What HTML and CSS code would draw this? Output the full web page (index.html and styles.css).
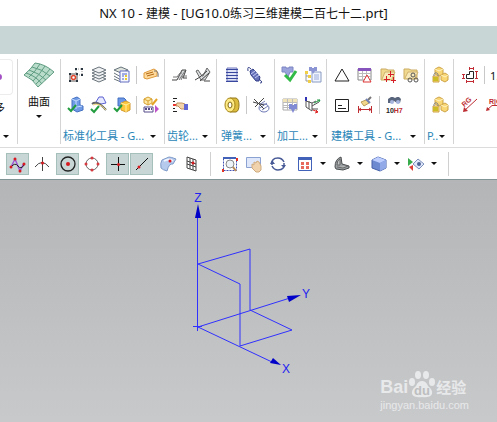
FILE: index.html
```html
<!DOCTYPE html>
<html lang="zh-CN">
<head>
    <meta charset="UTF-8">
    <meta name="viewport" content="width=device-width, initial-scale=1.0">
    <title>NX 10 - 建模</title>
    <link rel="stylesheet" href="styles.css">
</head>
<body>
    <header class="titlebar">NX 10 - <span>建模</span> - [UG10.0<span>练习三维建模二百七十二</span>.prt]</header>
    <div class="tabband"></div>

    <!-- ribbon -->
    <div class="ribbon">
        <section class="group g-more">
            <button class="big more">
                <span class="more-box"><svg width="12" height="34" viewBox="0 0 12 34"><circle cx="-1" cy="17" r="3" fill="#a24fc4"/></svg></span>
                <span class="more-text">多</span>
            </button>
            <button class="caption" aria-label="更多"><i class="arrow"></i></button>
        </section>

        <section class="group g-surface">
            <button class="big">
                <svg width="32" height="28" viewBox="0 0 32 28">
                    <path d="M12 2Q22 3 31 11L15 26Q10 18 1 14Q8 8 12 2Z" fill="#b9ddca" stroke="#5f9c82"/>
                    <path d="M9 6Q19 8 27 15M6 9Q16 12 23 19M3 12Q13 15 19 23M17 3Q12 11 6 16M22 5Q17 13 10 20M27 8Q22 15 13 23" fill="none" stroke="#5f9c82"/>
                </svg>
                <span>曲面</span>
                <i class="arrow"></i>
            </button>
        </section>

        <section class="group g-std">
            <div class="icons">
                <div class="row">
                    <button aria-label="属性"><svg viewBox="0 0 18 18"><path d="M9 3h6v6H9z" fill="#fff" stroke="#999" stroke-dasharray="1 1"/><path d="M3 8h7v7H3z" fill="#fff" stroke="#555"/><circle cx="6.500" cy="11.500" r="2" fill="#fff" stroke="#e0452c" stroke-width="1.500"/><path d="M8 2h2v2H8zM14 2h2v2h-2zM14 8h2v2h-2zM2 7h2v2H2zM9 7h2v2H9zM2 14h2v2H2zM9 14h2v2H9z" fill="#2c3640"/></svg></button>
                    <button aria-label="图层"><svg viewBox="0 0 18 18"><g fill="#eef0f2" stroke="#6a747c"><path d="M2 13l7-3 7 3-7 3z"/><path d="M2 10l7-3 7 3-7 3z"/><path d="M2 7l7-3 7 3-7 3z"/><path d="M2 4l7-3 7 3-7 3z"/></g></svg></button>
                    <button aria-label="图层设置"><svg viewBox="0 0 18 18"><path d="M1 13l7 3M1 10l7 4M1 7l7 4M1 4l7-3 7 3-7 3z" fill="#dfe4df" stroke="#68747c"/><path d="M7 5h9v11H7z" fill="#f6f7ff" stroke="#656fc0"/><path d="M9 8h5M9 10h2M9 13h2" stroke="#4b60c8"/><path d="M12 9h2v2h-2zM12 12h2v2h-2z" fill="#e8c930"/></svg></button>
                    <i class="bar"></i>
                    <button aria-label="标签"><svg viewBox="0 0 18 18"><path d="M2 7l10-4 3 2v5L5 13l-3-1z" fill="#ffd99a" stroke="#dd9a3c"/><path d="M4 8l7-2M5 10l7-2" stroke="#b06814"/><path d="M12 5q5-1 4 6" fill="none" stroke="#777"/></svg></button>
                </div>
                <div class="row">
                    <button aria-label="检查部件"><svg viewBox="0 0 18 18"><path d="M5 3l5-2 3 2v6l3 1v4l-6 2-5-3z" fill="#6f9be6" stroke="#4470c0"/><path d="M5 3l4 2v8M9 5l4-2M10 11l5-1" fill="none" stroke="#c5dbff"/><path d="M1 12l3 3 5-6" fill="none" stroke="#219c3e" stroke-width="2"/></svg></button>
                    <button aria-label="检查曲面"><svg viewBox="0 0 18 18"><path d="M6 6l3-5h4l3 6-5 1z" fill="#e7e9ff" stroke="#5b61d0"/><path d="M2 8q5-4 14 6" fill="none" stroke="#666" stroke-width="2"/><path d="M3 9q6-3 13 5" fill="none" stroke="#efd678"/><path d="M1 13l3 3 5-6" fill="none" stroke="#219c3e" stroke-width="2"/></svg></button>
                    <button aria-label="检查装配"><svg viewBox="0 0 18 18"><path d="M5 2h6l2 2v6H5z" fill="#6b96e5" stroke="#4470c0"/><path d="M8 7l5-2 4 2v7l-4 2-5-2z" fill="#ffc83b" stroke="#d39a2c"/><path d="M8 7l5 2 4-2M13 9v7" fill="none" stroke="#fff0a0"/><path d="M1 12l3 3 5-6" fill="none" stroke="#219c3e" stroke-width="2"/></svg></button>
                    <i class="bar"></i>
                    <button aria-label="重命名"><svg viewBox="0 0 18 18"><path d="M2 3l4-2 4 2v4L6 9 2 7z" fill="#ffe9a6" stroke="#d5a030"/><path d="M2 3l4 2 4-2M6 5v4" fill="none" stroke="#d5a030"/><path d="M10 9l5-6" stroke="#e4a326" stroke-width="2"/><path d="M2 11h9v5H2z" fill="#fff" stroke="#554a88"/><path d="M3 13h2M6 13h2M9 13h1" stroke="#554a88" stroke-width="2"/><path d="M13 9l4 4-4 4z" fill="#c052c8"/></svg></button>
                </div>
            </div>
            <button class="caption"><span>标准化工具 - G...</span><i class="arrow"></i></button>
        </section>

        <section class="group g-gear">
            <div class="icons">
                <div class="row">
                    <button aria-label="柱齿轮"><svg viewBox="0 0 18 18"><path d="M7 13l4-9h4l-3 8z" fill="#d5d8d9"/><path d="M1 14h5l5-10h4l-3 8h4" fill="none" stroke="#444"/><path d="M2 11h4l3-4h2M8 14l6-9M10 14l2-4h4" fill="none" stroke="#777"/></svg></button>
                    <button aria-label="锥齿轮"><svg viewBox="0 0 18 18"><path d="M2 5l5 9h4l5-8-3-4-4 8H8L4 4z" fill="#dcdfe0" stroke="#666"/><path d="M1 14l5-3 7-6M6 15l9-8M10 15h6" fill="none" stroke="#444"/></svg></button>
                </div>
                <div class="row">
                    <button aria-label="选择列表"><svg viewBox="0 0 18 18"><path d="M2 2.500h4M2 5.500h2M2 12.500h2M2 15.500h4" stroke="#222"/><path d="M2 9h4" stroke="#e33" stroke-width="2"/><path d="M6 7h5l3 1v5h-4l-3-3H5z" fill="#f3d3aa" stroke="#bf9160"/><path d="M13 8h4v6h-4z" fill="#6067d4"/></svg></button>
                </div>
            </div>
            <button class="caption"><span>齿轮...</span><i class="arrow"></i></button>
        </section>

        <section class="group g-spring">
            <div class="icons">
                <div class="row">
                    <button aria-label="圆柱弹簧"><svg viewBox="0 0 18 18"><path d="M4 2h10v13H4z" fill="#dfe3f6" stroke="#6f79bd"/><path d="M3 3.500h12M3 6.500h12M3 9.500h12M3 12.500h12M3 15.500h12" stroke="#39469d"/></svg></button>
                    <button aria-label="拉伸弹簧"><svg viewBox="0 0 18 18"><path d="M4 5l3-2 7 8-1 4h-3L5 9z" fill="#6873ba" stroke="#303d87"/><path d="M5 8l4-3M7 10l4-3M9 12l4-3" stroke="#c4cbf5"/><path d="M5 3Q1-1 2 5M13 13q5 4 1 4" fill="none" stroke="#303d87"/></svg></button>
                </div>
                <div class="row">
                    <button aria-label="碟簧"><svg viewBox="0 0 18 18"><path d="M7 2h6q3 1 3 7t-3 7H7z" fill="#dcbc3c" stroke="#94791a"/><ellipse cx="7" cy="9" rx="5" ry="7" fill="#ffeb86" stroke="#a48416"/><ellipse cx="7" cy="9" rx="2" ry="3" fill="#fff" stroke="#806810"/></svg></button>
                    <i class="bar"></i>
                    <button aria-label="删除弹簧"><svg viewBox="0 0 18 18"><path d="M7 9l6-4M8 12l7-5M10 14l6-4" stroke="#7681b9"/><ellipse cx="12" cy="12" rx="5" ry="4" fill="none" stroke="#6976b3"/><path d="M2 3l10 10M12 2L3 11M1 6l11 3" stroke="#444"/></svg></button>
                </div>
            </div>
            <button class="caption"><span>弹簧...</span><i class="arrow"></i></button>
        </section>

        <section class="group g-mach">
            <div class="icons">
                <div class="row">
                    <button aria-label="加工检查"><svg viewBox="0 0 18 18"><path d="M1 1h4v1h3V1h4v5H9l-2 5-3-5H1z" fill="#9aa3db" stroke="#7d86c2"/><path d="M4 9l5 5 6-9" fill="none" stroke="#32ba46" stroke-width="3"/></svg></button>
                    <button aria-label="加工导航器"><svg viewBox="0 0 18 18"><path d="M2 6v9h4M2 10h4" fill="none" stroke="#999"/><path d="M1 5h3v3H1zM4 9h3v3H4zM4 14h3v3H4z" fill="#f0ce45"/><path d="M8 6h9v10H8z" fill="#f1f5ff" stroke="#899bc2"/><path d="M10 9h5M10 11h5M10 13h5" stroke="#9bacdb"/><path d="M5 1h3v1h2V1h3v4h-2l-2 3-2-3H5z" fill="#8b95d4"/></svg></button>
                </div>
                <div class="row">
                    <button aria-label="加工表"><svg viewBox="0 0 18 18"><path d="M2 3h14v11H2z" fill="#fff" stroke="#aaa"/><path d="M2 3h14v3H2z" fill="#f0e3b8"/><path d="M2 6.500h14M2 9.500h14M2 11.500h14M6.500 3v11M11.500 3v11" stroke="#bbb"/><path d="M8 8h3v1h2V8h3v5h-2l-2 4-2-4H8z" fill="#808bd4"/></svg></button>
                    <button aria-label="坐标加工"><svg viewBox="0 0 18 18"><path d="M2 1v4" stroke="#3131b6" stroke-width="2"/><path d="M2 5l6 2v8l-6-4zM5 5v8M8 10l7-4M8 13h6M8 7l4-2" fill="none" stroke="#555"/><path d="M10 7l6-3M13 4h3l-1 2" fill="none" stroke="#249944"/><path d="M9 14l5 2M12 14l2 2-3 1" fill="none" stroke="#d22"/></svg></button>
                </div>
            </div>
            <button class="caption"><span>加工...</span><i class="arrow"></i></button>
        </section>

        <section class="group g-model">
            <div class="icons">
                <div class="row">
                    <button aria-label="三角形"><svg viewBox="0 0 18 18"><path d="M9 3l7 12H2z" fill="none" stroke="#222"/></svg></button>
                    <button aria-label="表格"><svg viewBox="0 0 18 18"><path d="M2 3h13v11H2z" fill="#fff" stroke="#888"/><path d="M2 7.500h13M2 10.500h13M6.500 4v10M10.500 4v10" stroke="#bbb"/><path d="M2 2h13v3H2z" fill="#8754bd"/><path d="M11 9l4 7H7z" fill="#fff" stroke="#d33"/></svg></button>
                    <button aria-label="新建文件夹"><svg viewBox="0 0 18 18"><path d="M2 3h5l2 1h6v10H2z" fill="#f0d98f" stroke="#c9ab61"/><path d="M3 13l3-7h10l-3 7" fill="#f8e9b8" stroke="#d0b26c"/><path d="M11.500 5v6M9 8.500h6M7.500 10v6M5 13.500h6M14.500 11v6M12 14.500h5" stroke="#d51e28"/></svg></button>
                    <button aria-label="文件夹链接"><svg viewBox="0 0 18 18"><path d="M2 3h5l2 1h6v9H2z" fill="#f0d98f" stroke="#c9ab61"/><path d="M3 12l3-6h10l-3 6" fill="#f8e9b8" stroke="#d0b26c"/><g fill="none" stroke="#555"><circle cx="11" cy="9" r="2"/><circle cx="8" cy="14" r="2"/><circle cx="14" cy="14" r="2"/></g></svg></button>
                </div>
                <div class="row">
                    <button aria-label="注释框"><svg viewBox="0 0 18 18"><path d="M2.500 3.500h13v12h-13z" fill="#fff" stroke="#222"/><path d="M5 9.500h4M5 12.500h8" stroke="#222"/></svg></button>
                    <button aria-label="清理尺寸"><svg viewBox="0 0 18 18"><path d="M12 4l3-3" stroke="#777" stroke-width="2"/><path d="M5 6l5-2 3 3-5 3z" fill="#f0d78b" stroke="#b99a57"/><path d="M10 3l4 4" stroke="#7483b7" stroke-width="2"/><path d="M2.500 10v7M15.500 10v7M3 13.500h12M5 12l-2 1.500 2 1.500M13 12l2 1.500-2 1.500" fill="none" stroke="#bd2d32"/></svg></button>
                    <i class="bar"></i>
                    <button aria-label="公差查询"><svg viewBox="0 0 18 18"><path d="M3 3l3-2h2l2 1 2-1h2l2 2-1 4h-3L9 5 7 7H3z" fill="#59657c"/><circle cx="7" cy="6" r="2" fill="#a8b6df"/><circle cx="13" cy="6" r="2" fill="#a8b6df"/><text x="1" y="17" class="fit">10<tspan fill="#bd2d32">H7</tspan></text></svg></button>
                </div>
            </div>
            <button class="caption"><span>建模工具 - G...</span><i class="arrow"></i></button>
        </section>

        <section class="group g-parts">
            <div class="icons">
                <div class="row">
                    <button aria-label="添加组件"><svg viewBox="0 0 18 18"><g fill="#f9d774" stroke="#cda448"><path d="M4 3l4-2 4 2v5l-4 2-4-2z"/><path d="M10 9l4-2 3 2v5l-3 2-4-2z"/><path d="M2 10h6v6H2z"/></g><path d="M4 3l4 2 4-2M10 9l4 2 3-2" fill="none" stroke="#fff3c0"/><path d="M3 10V8q2-3 4 0v2" fill="none" stroke="#888"/><path d="M2 11h5v4H2z" fill="#cbbc28"/></svg></button>
                </div>
                <div class="row">
                    <button aria-label="装配组件"><svg viewBox="0 0 18 18"><g fill="#f9d774" stroke="#cda448"><path d="M4 3l4-2 4 2v5l-4 2-4-2z"/><path d="M10 9l4-2 3 2v5l-3 2-4-2z"/><path d="M2 10h6v6H2z"/></g><path d="M4 3l4 2 4-2M10 9l4 2 3-2" fill="none" stroke="#fff3c0"/><path d="M3 10V8q2-3 4 0v2" fill="none" stroke="#888"/><path d="M2 11h5v4H2z" fill="#cbbc28"/></svg></button>
                </div>
            </div>
            <button class="caption"><span>P..</span><i class="arrow"></i></button>
        </section>

        <section class="group g-dim">
            <div class="icons">
                <div class="row">
                    <button aria-label="快速尺寸"><svg viewBox="0 0 18 18"><path d="M8.500 5.500h4v7h-7v-4h3z" fill="none" stroke="#222"/><path d="M8 2.500h5M8.500 1v3M12.500 1v3M15.500 5v8M14 5.500h3M14 12.500h3M5 15.500h8M5.500 14v3M12.500 14v3M2.500 9v3M1 8.500h3M1 12.500h3" stroke="#c22d35"/></svg></button>
                    <i class="bar"></i>
                    <button class="num">1.</button>
                </div>
                <div class="row">
                    <button aria-label="半径尺寸"><svg viewBox="0 0 18 18"><path d="M3 15L16 3" stroke="#bd2d32"/><path d="M2 16l1-5 4 4z" fill="#bd2d32"/><text x="1" y="9" transform="rotate(-42 5 7)" class="dim">RG</text></svg></button>
                    <button aria-label="折弯半径"><svg viewBox="0 0 18 18"><path d="M3 14l5-4.500h10" fill="none" stroke="#bd2d32"/><path d="M2 15l1-4 3 3z" fill="#bd2d32"/><text x="5" y="8" class="dim">R|G</text></svg></button>
                </div>
            </div>
        </section>
    </div>

    <!-- snap and view toolbar -->
    <div class="toolbar">
        <div class="pair">
            <button class="on" aria-label="曲线上的点"><svg viewBox="0 0 18 18"><path d="M2 12L6 4l5 12 4-8" fill="none" stroke="#a057d6" stroke-width="1.500"/><path d="M2 12Q6 7 9 11t6-1" fill="none" stroke="#222"/><g fill="#d71920"><circle cx="2" cy="12" r="1.500"/><circle cx="6" cy="4" r="1.500"/><circle cx="11" cy="16" r="1.500"/><circle cx="15" cy="9" r="1.500"/></g></svg></button>
            <button aria-label="交点"><svg viewBox="0 0 18 18"><path d="M9.500 2v14M2 12q7-9 14 0" fill="none" stroke="#444"/><circle cx="9.500" cy="8" r="1.500" fill="#d71920"/></svg></button>
        </div>
        <div class="pair">
            <button class="on" aria-label="圆心"><svg viewBox="0 0 18 18"><circle cx="9" cy="9" r="7" fill="none" stroke="#222" stroke-width="1.300"/><circle cx="9" cy="9" r="2" fill="#d71920"/></svg></button>
            <button aria-label="象限点"><svg viewBox="0 0 18 18"><circle cx="9" cy="9" r="6" fill="none" stroke="#666"/><g fill="#d73940"><circle cx="9" cy="3" r="1.500"/><circle cx="15" cy="9" r="1.500"/><circle cx="9" cy="15" r="1.500"/><circle cx="3" cy="9" r="1.500"/></g></svg></button>
        </div>
        <div class="pair">
            <button class="on" aria-label="现有点"><svg viewBox="0 0 18 18"><path d="M9.500 2v14M2 9.500h14" stroke="#111"/><circle cx="9.500" cy="9.500" r="1.500" fill="#d71920"/></svg></button>
            <button class="on" aria-label="线上的点"><svg viewBox="0 0 18 18"><path d="M3 15L15 3" stroke="#111"/><circle cx="6" cy="12" r="1.500" fill="#d71920"/></svg></button>
        </div>
        <div class="pair">
            <button aria-label="面上的点"><svg viewBox="0 0 18 18"><path d="M3 5l7-3q2 0 7 2l-3 5q-4-1-6 7-4-1-6-3-1-5 1-8z" fill="#b5caec" stroke="#809bc9"/><path d="M5 6q5-3 9 0" fill="none" stroke="#eef5ff" stroke-width="2"/><circle cx="11" cy="6" r="1.500" fill="#d71920"/></svg></button>
            <button aria-label="网格点"><svg viewBox="0 0 18 18"><path d="M4 2l9 3v11l-9-3zM7 3v11M10 4v11M4 6l9 3M4 9l9 3" fill="none" stroke="#444"/><circle cx="10" cy="8" r="1.500" fill="#d71920"/></svg></button>
        </div>
        <i class="divider"></i>
        <div class="pair">
            <button aria-label="缩放窗口"><svg viewBox="0 0 18 18"><path d="M2.500 3.500h13v12h-13z" fill="none" stroke="#4051b2" stroke-dasharray="2 1"/><path d="M2 2h13v2H2z" fill="#4262ba"/><circle cx="9" cy="9" r="4" fill="#edf3f7" stroke="#888"/><path d="M12 12l3 4" stroke="#b98a55" stroke-width="2"/><path d="M15 3h2v3h-2zM1 14h2v3H1z" fill="#e13528"/></svg></button>
            <button aria-label="平移"><svg viewBox="0 0 18 18"><path d="M1.500 2.500h14v10h-14z" fill="#dfe8fa" stroke="#8ba1d1"/><path d="M7 9l2 1 0-3 2 1 1-2 2 1 1 2 1 2v4l-2 2h-3l-4-4z" fill="#f0d3ac" stroke="#cfac80"/></svg></button>
            <button aria-label="旋转"><svg viewBox="0 0 18 18"><path d="M3 10Q2 3 9 3q4 0 6 4M15 8q1 7-6 7-4 0-6-4" fill="none" stroke="#485a96" stroke-width="1.500"/><path d="M1 9h5l-3-4zM12 10h5l-2 3z" fill="#485a96"/></svg></button>
        </div>
        <div class="pair views">
            <button class="drop" aria-label="适合窗口"><svg viewBox="0 0 18 18"><path d="M2.500 2.500h13v13h-13z" fill="#fff" stroke="#4262ba"/><path d="M2 2h14v3H2z" fill="#4262ba"/><path d="M5 7h3v3H5zM10 7h3v3h-3zM5 11h3v3H5zM10 11h3v3h-3z" fill="#e86a5c"/></svg><i class="arrow"></i></button>
            <button class="drop" aria-label="定向视图"><svg viewBox="0 0 18 18"><path d="M2 12Q2 4 8 2l1 7 7 2v2l-6 2-7-1z" fill="#9a9fa1" stroke="#4a4d4f"/><path d="M4 10q0-5 3-6v6zM4 12l6 1 5-2" fill="#c2c6c7" stroke="#666"/></svg><i class="arrow"></i></button>
            <button class="drop" aria-label="渲染样式"><svg viewBox="0 0 18 18"><path d="M2 5l6-3 8 3v8l-6 3-8-3z" fill="#6d89d0" stroke="#4661a8"/><path d="M2 5l6-3 8 3-6 3z" fill="#bdceff"/><path d="M10 8l6-3v8l-6 3z" fill="#92abe8"/></svg><i class="arrow"></i></button>
            <button class="drop" aria-label="显示和隐藏"><svg viewBox="0 0 18 18"><path d="M1 3l5 4-5 4z" fill="#38ac4d"/><path d="M2 12l4-2v6z" fill="#dc3e36"/><path d="M6 9l5-5 6 5-5 5z" fill="#dfe7fb" stroke="#7d90bb"/><circle cx="12" cy="9" r="2" fill="#4d6295"/></svg><i class="arrow"></i></button>
        </div>
        <i class="divider"></i>
    </div>

    <!-- graphics window -->
    <main class="viewport">
        <svg class="scene" width="497" height="242" viewBox="0 0 497 242">
            <g class="wire">
                <path d="M198 84L250 69V130L292 150L240 166V104Z"/>
                <path d="M197.500 30V151M193 146.500H202"/>
                <path d="M198 147L290 118M198 147L272 182"/>
            </g>
            <g class="heads">
                <path d="M198 24L201 38H195Z"/>
                <path d="M301 115L287 116L289 122Z"/>
                <path d="M281 185L273 178L270 183Z"/>
            </g>
            <g class="axis">
                <text x="198" y="22">Z</text>
                <text x="306" y="118">Y</text>
                <text x="286" y="193">X</text>
            </g>
        </svg>
        <div class="watermark">
            <div class="brand">
                <span class="bai">Bai</span>
                <svg width="26" height="28" viewBox="0 0 26 28">
                    <g fill="#e8e9ea"><ellipse cx="3" cy="12" rx="3" ry="4"/><ellipse cx="9" cy="5" rx="3" ry="4"/><ellipse cx="17" cy="5" rx="3" ry="4"/><ellipse cx="23" cy="12" rx="3" ry="4"/><path d="M13 11q4 0 6 5 5 4 4 8-2 4-10 3-8 1-10-3-1-4 4-8 2-5 6-5z"/></g>
                    <text x="13" y="25" class="du">du</text>
                </svg>
                <span class="jy">经验</span>
            </div>
            <div class="url">jingyan.baidu.com</div>
        </div>
    </main>
</body>
</html>
```
FILE: styles.css
```css
* {
    box-sizing: border-box;
}

body {
    margin: 0;
    height: 100vh;
    display: flex;
    flex-direction: column;
    overflow: hidden;
    background-color: #fff;
    font-family: "Noto Sans", "Noto Sans CJK SC", sans-serif;
    font-size: 11px;
    color: #111;
}

button {
    border: 0;
    padding: 0;
    background: none;
    font: inherit;
    color: inherit;
    flex: none;
}

svg {
    display: block;
}

.titlebar {
    height: 26px;
    line-height: 26px;
    padding-right: 10px;
    font-size: 13px;
    text-align: center;
    white-space: nowrap;
}

.titlebar span {
    font-size: 12px;
}

.tabband {
    height: 28px;
    background-color: #c8d7d6;
}

.arrow {
    border: 3px solid transparent;
    border-top-color: #111;
    border-bottom: 0;
}

/* ribbon */
.ribbon {
    display: flex;
    height: 94px;
    padding: 5px 0 3px;
    border-bottom: 1px solid #dcdcdc;
    overflow: hidden;
}

.group {
    display: flex;
    flex-direction: column;
    justify-content: space-between;
    flex: none;
    border-right: 1px solid #d4d4d4;
    overflow: hidden;
}

.g-more { width: 18px; }
.g-surface { width: 43px; }
.g-std { width: 104px; }
.g-gear { width: 52px; }
.g-spring { width: 58px; }
.g-mach { width: 52px; }
.g-model { width: 98px; }
.g-parts { width: 29px; }
.g-dim { flex: 1; border-right: 0; }

.icons {
    display: flex;
    flex-direction: column;
    gap: 12px;
    padding: 7px 0 0 6px;
}

.row {
    display: flex;
    gap: 5px;
}

.row button {
    width: 18px;
    height: 18px;
}

.row svg,
.toolbar svg {
    width: 18px;
    height: 18px;
}

.bar {
    flex: none;
    width: 1px;
    height: 18px;
    background-color: #c8c8c8;
}

.g-dim .row {
    padding-left: 1px;
}

.row .num {
    text-align: left;
}

.row .fit {
    font: bold 7px "Liberation Sans", sans-serif;
    fill: #222;
}

.row .dim {
    font: bold 7px "Liberation Sans", sans-serif;
    fill: #bd2d32;
}

.caption {
    display: flex;
    align-items: center;
    height: 16px;
    padding: 0 8px 0 2px;
    line-height: 16px;
    color: #2a86b8;
    white-space: nowrap;
}

.caption .arrow {
    margin-left: auto;
}

.g-spring .caption,
.g-model .caption {
    padding-left: 4px;
}

.big {
    display: flex;
    flex-direction: column;
    align-items: center;
    gap: 4px;
    padding-top: 2px;
    line-height: 18px;
}

.more {
    align-items: flex-start;
    padding-top: 0;
}

.more-box {
    border: 1px solid #ececec;
    border-left: 0;
    border-radius: 0 4px 4px 0;
}

.more-text {
    width: 5px;
    display: flex;
    justify-content: flex-end;
}

/* toolbar */
.toolbar {
    display: flex;
    align-items: center;
    gap: 3px;
    height: 32px;
    padding-left: 6px;
    border-bottom: 1px solid #7f9595;
}

.pair {
    display: flex;
    gap: 1px;
}

.pair button {
    display: flex;
    align-items: center;
    justify-content: center;
    width: 23px;
    height: 22px;
}

.pair .on {
    background-color: #c8d7d6;
    border: 1px solid #a5c0bb;
}

.views {
    padding-left: 2px;
}

.pair .drop {
    width: 36px;
    justify-content: space-between;
    padding: 0 4px 0 2px;
}

.divider {
    flex: none;
    width: 1px;
    height: 24px;
    margin: 0 4px;
    background-color: #d0d0d0;
}

/* graphics window */
.viewport {
    position: relative;
    flex: 1;
    overflow: hidden;
    background: linear-gradient(#b4b5b7, #c8c9cb);
}

.wire {
    fill: none;
    stroke: #3030ff;
}

.heads {
    fill: #0000c8;
}

.axis {
    font: 12px "Liberation Sans", sans-serif;
    fill: #2222f0;
    text-anchor: middle;
}

.watermark {
    position: absolute;
    right: 28px;
    bottom: 10px;
    color: #e8e9ea;
}

.brand {
    display: flex;
    align-items: flex-end;
    gap: 1px;
    height: 28px;
}

.bai {
    font: bold 18px/22px "Liberation Sans", sans-serif;
}

.jy {
    font-size: 15px;
    font-weight: bold;
    line-height: 22px;
}

.du {
    font: bold 13px "Liberation Sans", sans-serif;
    fill: #bdbec0;
    text-anchor: middle;
}

.url {
    font: 11px/14px "Liberation Sans", sans-serif;
}
```
